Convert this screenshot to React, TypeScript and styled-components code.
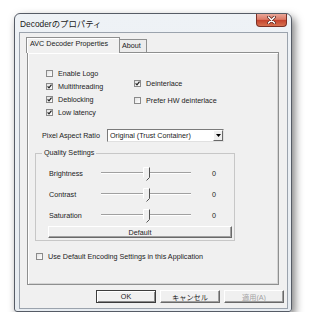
import React from 'react'
import styled, { createGlobalStyle } from 'styled-components'

const GlobalStyle = createGlobalStyle`
  html, body {
    margin: 0;
    background: #ffffff;
  }
  body {
    font-family: "Liberation Sans", "Noto Sans CJK JP", sans-serif;
    font-size: 7.2px;
    color: #222;
  }
`

const Page = styled.div`
  padding: 13px 0 0 14px;
`

const Window = styled.div`
  width: 278px;
  height: 299px;
  box-sizing: border-box;
  border: 1px solid #565c66;
  border-radius: 6px 6px 3px 3px;
  background: linear-gradient(180deg, #eef2f6 0%, #e7ecf1 100%);
  box-shadow: 3px 4px 8px rgba(0, 0, 0, 0.5);
  display: flex;
  flex-direction: column;
  padding: 0 3px 2px 4px;
`

const TitleBar = styled.div`
  height: 18px;
  display: flex;
  align-items: center;
  padding-left: 1px;
`

const Title = styled.div`
  font-size: 8.4px;
  color: #1a1a1a;
`

const CloseButton = styled.div`
  margin-left: auto;
  margin-right: 1px;
  align-self: flex-start;
  width: 31px;
  height: 13px;
  box-sizing: border-box;
  border: 1px solid #7a3026;
  border-top: none;
  border-radius: 0 0 4px 4px;
  background: linear-gradient(180deg, #e9a698 0%, #dc7a66 45%, #c5432e 52%, #d7714f 100%);
  display: flex;
  align-items: center;
  justify-content: center;
`

const Client = styled.div`
  flex: 1;
  border: 1px solid #9ba3ad;
  background: #f0f0f0;
  padding: 4px 0 0 6px;
  display: flex;
  flex-direction: column;
`

const TabStrip = styled.div`
  display: flex;
  align-items: flex-end;
  height: 15px;
`

const Tab = styled.div<{ $active?: boolean }>`
  box-sizing: border-box;
  border: 1px solid #8e8f8f;
  border-bottom: none;
  line-height: 12px;
  white-space: nowrap;
  ${p => p.$active ? `
    width: 94px;
    height: 16px;
    margin-bottom: -1px;
    padding-left: 3px;
    background: #f0f0f0;
    position: relative;
    z-index: 1;
    box-shadow: inset 1px 1px 0 #ffffff;
  ` : `
    width: 27px;
    height: 13px;
    border-left: none;
    padding-left: 2px;
    background: #ececec;
  `}
`

const Panel = styled.div`
  margin-left: 1px;
  width: 252px;
  height: 233px;
  box-sizing: border-box;
  border: 1px solid #8e8f8f;
  background: #f0f0f0;
  box-shadow: inset 1px 1px 0 #ffffff, inset -1px -1px 0 #d4d4d4;
  display: flex;
  flex-direction: column;
`

const CheckGrid = styled.div`
  display: flex;
  padding: 14px 0 0 18px;
`

const Column = styled.div<{ $width?: number; $top?: number }>`
  display: flex;
  flex-direction: column;
  gap: ${p => (p.$top ? 4 : 0)}px;
  width: ${p => (p.$width ? `${p.$width}px` : 'auto')};
  padding-top: ${p => p.$top ?? 0}px;
`

const CheckRow = styled.div<{ $indent?: number; $top?: number }>`
  height: 13px;
  display: flex;
  align-items: center;
  gap: 5px;
  margin-left: ${p => p.$indent ?? 0}px;
  margin-top: ${p => p.$top ?? 0}px;
  white-space: nowrap;
`

const Box = styled.div`
  width: 7px;
  height: 7px;
  box-sizing: border-box;
  border: 1px solid #8a8a8a;
  background: linear-gradient(135deg, #e2e2e2, #ffffff);
  display: flex;
  align-items: center;
  justify-content: center;
`

const AspectRow = styled.div`
  display: flex;
  align-items: center;
  margin-top: 10px;
  padding-left: 14px;
`

const FieldLabel = styled.div`
  width: 65px;
  white-space: nowrap;
`

const Select = styled.div`
  width: 117px;
  height: 13px;
  box-sizing: border-box;
  border: 1px solid;
  border-color: #7a7a7a #e0e0e0 #e0e0e0 #7a7a7a;
  background: #ffffff;
  display: flex;
  align-items: center;
  padding-left: 2px;
  white-space: nowrap;
`

const SelectArrow = styled.div`
  margin-left: auto;
  width: 10px;
  height: 11px;
  box-sizing: border-box;
  border: 1px solid;
  border-color: #ffffff #696969 #696969 #ffffff;
  background: #f0f0f0;
  display: flex;
  align-items: center;
  justify-content: center;
`

const Group = styled.fieldset`
  margin: 7px 0 0 7px;
  width: 200px;
  box-sizing: border-box;
  border: 1px solid #c7c7c7;
  padding: 0 1px 2px 12px;
  min-inline-size: 0;
`

const Legend = styled.legend`
  padding: 0 2px;
  margin-left: -6px;
  line-height: 8px;
`

const SliderList = styled.div`
  display: flex;
  flex-direction: column;
  gap: 1px;
  margin-top: 6px;
`

const SliderRow = styled.div`
  height: 20px;
  display: flex;
  align-items: center;
`

const SliderLabel = styled.div`
  width: 52px;
  padding-left: 1px;
`

const Track = styled.div`
  position: relative;
  width: 90px;
  height: 0;
  border-top: 1px solid #a0a0a0;
  border-bottom: 1px solid #ffffff;
`

const Thumb = styled.svg`
  position: absolute;
  top: -6px;
  display: block;
`

const Value = styled.div`
  margin-left: 21px;
`

const PushButton = styled.div<{ $width: number; $height?: number; $default?: boolean; $disabled?: boolean }>`
  width: ${p => p.$width}px;
  height: ${p => p.$height ?? 13}px;
  box-sizing: border-box;
  background: #f0f0f0;
  display: flex;
  align-items: center;
  justify-content: center;
  white-space: nowrap;
  color: ${p => (p.$disabled ? '#a3a3a3' : '#222')};
  ${p => p.$default ? `
    border: 1px solid #3c3c3c;
    box-shadow: inset 1px 1px 0 #ffffff, inset -1px -1px 0 #8a8a8a;
  ` : `
    border: 1px solid;
    border-color: #ffffff #696969 #696969 #ffffff;
    box-shadow: inset -1px -1px 0 #a0a0a0;
  `}
`

const DefaultButtonWrap = styled.div`
  margin-top: 1px;
`

const ButtonRow = styled.div`
  display: flex;
  justify-content: flex-end;
  gap: 4px;
  margin-top: 5px;
  padding-right: 3px;
`

function Check({ checked, label, indent, top }: { checked?: boolean; label: string; indent?: number; top?: number }) {
  return (
    <CheckRow $indent={indent} $top={top}>
      <Box>
        {checked && (
          <svg width="5" height="5" viewBox="0 0 5 5">
            <path d="M0.6 2.4 L2 3.9 L4.5 0.6" fill="none" stroke="#1e1e1e" strokeWidth="1.2" />
          </svg>
        )}
      </Box>
      {label}
    </CheckRow>
  )
}

function Slider({ label, value }: { label: string; value: number }) {
  // value range -100..100 mapped onto the track
  const left = ((value + 100) / 200) * 90 - 3.5
  return (
    <SliderRow>
      <SliderLabel>{label}</SliderLabel>
      <Track>
        <Thumb width="7" height="14" viewBox="0 0 7 14" style={{ left }}>
          <path d="M0.5 0.5 H6.5 V10.5 L3.5 13.5 L0.5 10.5 Z" fill="#f0f0f0" />
          <path d="M0.5 10.5 V0.5 H6" fill="none" stroke="#ffffff" strokeWidth="1" />
          <path d="M6.5 0.5 V10.5 L3.5 13.5" fill="none" stroke="#555" strokeWidth="1" />
        </Thumb>
      </Track>
      <Value>{value}</Value>
    </SliderRow>
  )
}

export default function App() {
  return (
    <>
      <GlobalStyle />
      <Page>
        <Window>
          <TitleBar>
            <Title>Decoderのプロパティ</Title>
            <CloseButton>
              <svg width="9" height="8" viewBox="0 0 9 8">
                <path d="M1.5 1 L7.5 7 M7.5 1 L1.5 7" stroke="#5a2018" strokeWidth="3" strokeLinecap="round" />
                <path d="M1.5 1 L7.5 7 M7.5 1 L1.5 7" stroke="#ffffff" strokeWidth="1.6" strokeLinecap="round" />
              </svg>
            </CloseButton>
          </TitleBar>
          <Client>
            <TabStrip>
              <Tab $active>AVC Decoder Properties</Tab>
              <Tab>About</Tab>
            </TabStrip>
            <Panel>
              <CheckGrid>
                <Column $width={88}>
                  <Check label="Enable Logo" />
                  <Check checked label="Multithreading" />
                  <Check checked label="Deblocking" />
                  <Check checked label="Low latency" />
                </Column>
                <Column $top={10}>
                  <Check checked label="Deinterlace" />
                  <Check label="Prefer HW deinterlace" />
                </Column>
              </CheckGrid>
              <AspectRow>
                <FieldLabel>Pixel Aspect Ratio</FieldLabel>
                <Select>
                  Original (Trust Container)
                  <SelectArrow>
                    <svg width="5" height="3" viewBox="0 0 5 3">
                      <path d="M0 0 H5 L2.5 3 Z" fill="#000" />
                    </svg>
                  </SelectArrow>
                </Select>
              </AspectRow>
              <Group>
                <Legend>Quality Settings</Legend>
                <SliderList>
                  <Slider label="Brightness" value={0} />
                  <Slider label="Contrast" value={0} />
                  <Slider label="Saturation" value={0} />
                </SliderList>
                <DefaultButtonWrap>
                  <PushButton $width={184} $height={12}>Default</PushButton>
                </DefaultButtonWrap>
              </Group>
              <Check indent={8} top={9} label="Use Default Encoding Settings in this Application" />
            </Panel>
            <ButtonRow>
              <PushButton $width={60} $default>OK</PushButton>
              <PushButton $width={60}>キャンセル</PushButton>
              <PushButton $width={60} $disabled>適用(A)</PushButton>
            </ButtonRow>
          </Client>
        </Window>
      </Page>
    </>
  )
}
